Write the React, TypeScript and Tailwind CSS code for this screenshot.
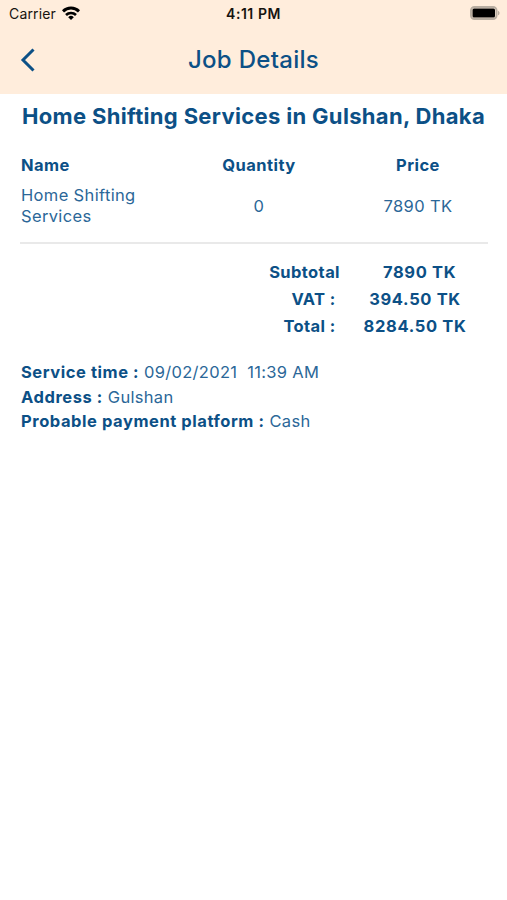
const totals = [
  { label: "Subtotal", value: "\u00a0\u00a07890 TK" },
  { label: "VAT :\u00a0", value: "394.50 TK" },
  { label: "Total :\u00a0", value: "8284.50 TK" },
];

const details = [
  { label: "Service time :", value: "09/02/2021\u00a0 11:39 AM" },
  { label: "Address :", value: "Gulshan" },
  { label: "Probable payment platform :", value: "Cash" },
];

function StatusBar() {
  return (
    <div className="grid grid-cols-3 items-center h-[26px] pl-[9px] pr-[7px] text-[14px] text-[#17130f]">
      <div className="flex items-center gap-[6px]">
        <span className="tracking-[0.15px]">Carrier</span>
        <svg width="18" height="14" viewBox="0 0 18 14" fill="none" stroke="black" strokeWidth="3">
          <path d="M1 5.300a11.500 11.500 0 0 1 16 0" />
          <path d="M4 9a7.100 7.100 0 0 1 10 0" strokeWidth="2.6" />
          <path d="M9 13.900L6.200 11.200a4 4 0 0 1 5.600 0z" fill="black" stroke="none" />
        </svg>
      </div>
      <span className="text-center font-semibold tracking-[0.55px] -ml-[2px]">4:11 PM</span>
      <div className="flex justify-end">
        <svg width="30" height="14" viewBox="0 0 30 14">
          <rect x="1" y="1" width="25.500" height="12" rx="3.5" fill="none" stroke="#b8ada1" strokeWidth="2" />
          <rect x="2.5" y="2.500" width="22.500" height="9" rx="1.500" fill="black" />
          <path d="M28 4.700c2 .8 2 3.800 0 4.600z" fill="#b8ada1" />
        </svg>
      </div>
    </div>
  );
}

export default function App() {
  return (
    <div className="min-h-screen bg-white font-['Inter',sans-serif] text-[#0c5086]">
      <header className="h-[94px] bg-[#ffeddc]">
        <StatusBar />
        <div className="grid grid-cols-[40px_1fr_40px] items-center h-[67px] px-5">
          <svg width="16" height="24" viewBox="0 0 16 24" fill="none" stroke="currentColor" strokeWidth="3">
            <path d="M13.500 1.500L3 12l10.500 10.500" />
          </svg>
          <h1 className="text-center text-[24px] font-medium tracking-[0.3px]">Job Details</h1>
        </div>
      </header>

      <main className="px-[21px] pt-[7px]">
        <h2 className="text-center whitespace-nowrap text-[22px] leading-[30px] font-bold tracking-[0.33px]">
          Home Shifting Services in Gulshan, Dhaka
        </h2>

        <div className="grid grid-cols-[159px_158px_160px] pt-[21px] text-[16.5px] leading-[26px] font-bold tracking-[0.45px]">
          <span>Name</span>
          <span className="text-center">Quantity</span>
          <span className="text-center">Price</span>
        </div>
        <div className="grid grid-cols-[159px_158px_160px] items-center pt-[7px] pb-[15px] text-[16.5px] leading-[21px] tracking-[0.35px] text-[#2b6798]">
          <span>Home Shifting Services</span>
          <span className="text-center">0</span>
          <span className="text-center">7890 TK</span>
        </div>
        <hr className="border-0 h-[2px] bg-[#e9e9e9] -ml-px -mr-[2px]" />

        <div className="pt-[15px] text-[16.5px] leading-[27px] font-bold">
          {totals.map((row) => (
            <div key={row.label} className="grid grid-cols-[319px_150px]">
              <span className="text-right tracking-[0.4px]">{row.label}</span>
              <span className="text-center tracking-[0.65px]">{row.value}</span>
            </div>
          ))}
        </div>

        <div className="pt-[20px] text-[16.5px] leading-[24.5px] tracking-[0.3px] text-[#2b6798]">
          {details.map((row) => (
            <p key={row.label}>
              <strong className="font-bold tracking-[0.56px] text-[#0c5086]">{row.label}</strong> {row.value}
            </p>
          ))}
        </div>
      </main>
    </div>
  );
}
